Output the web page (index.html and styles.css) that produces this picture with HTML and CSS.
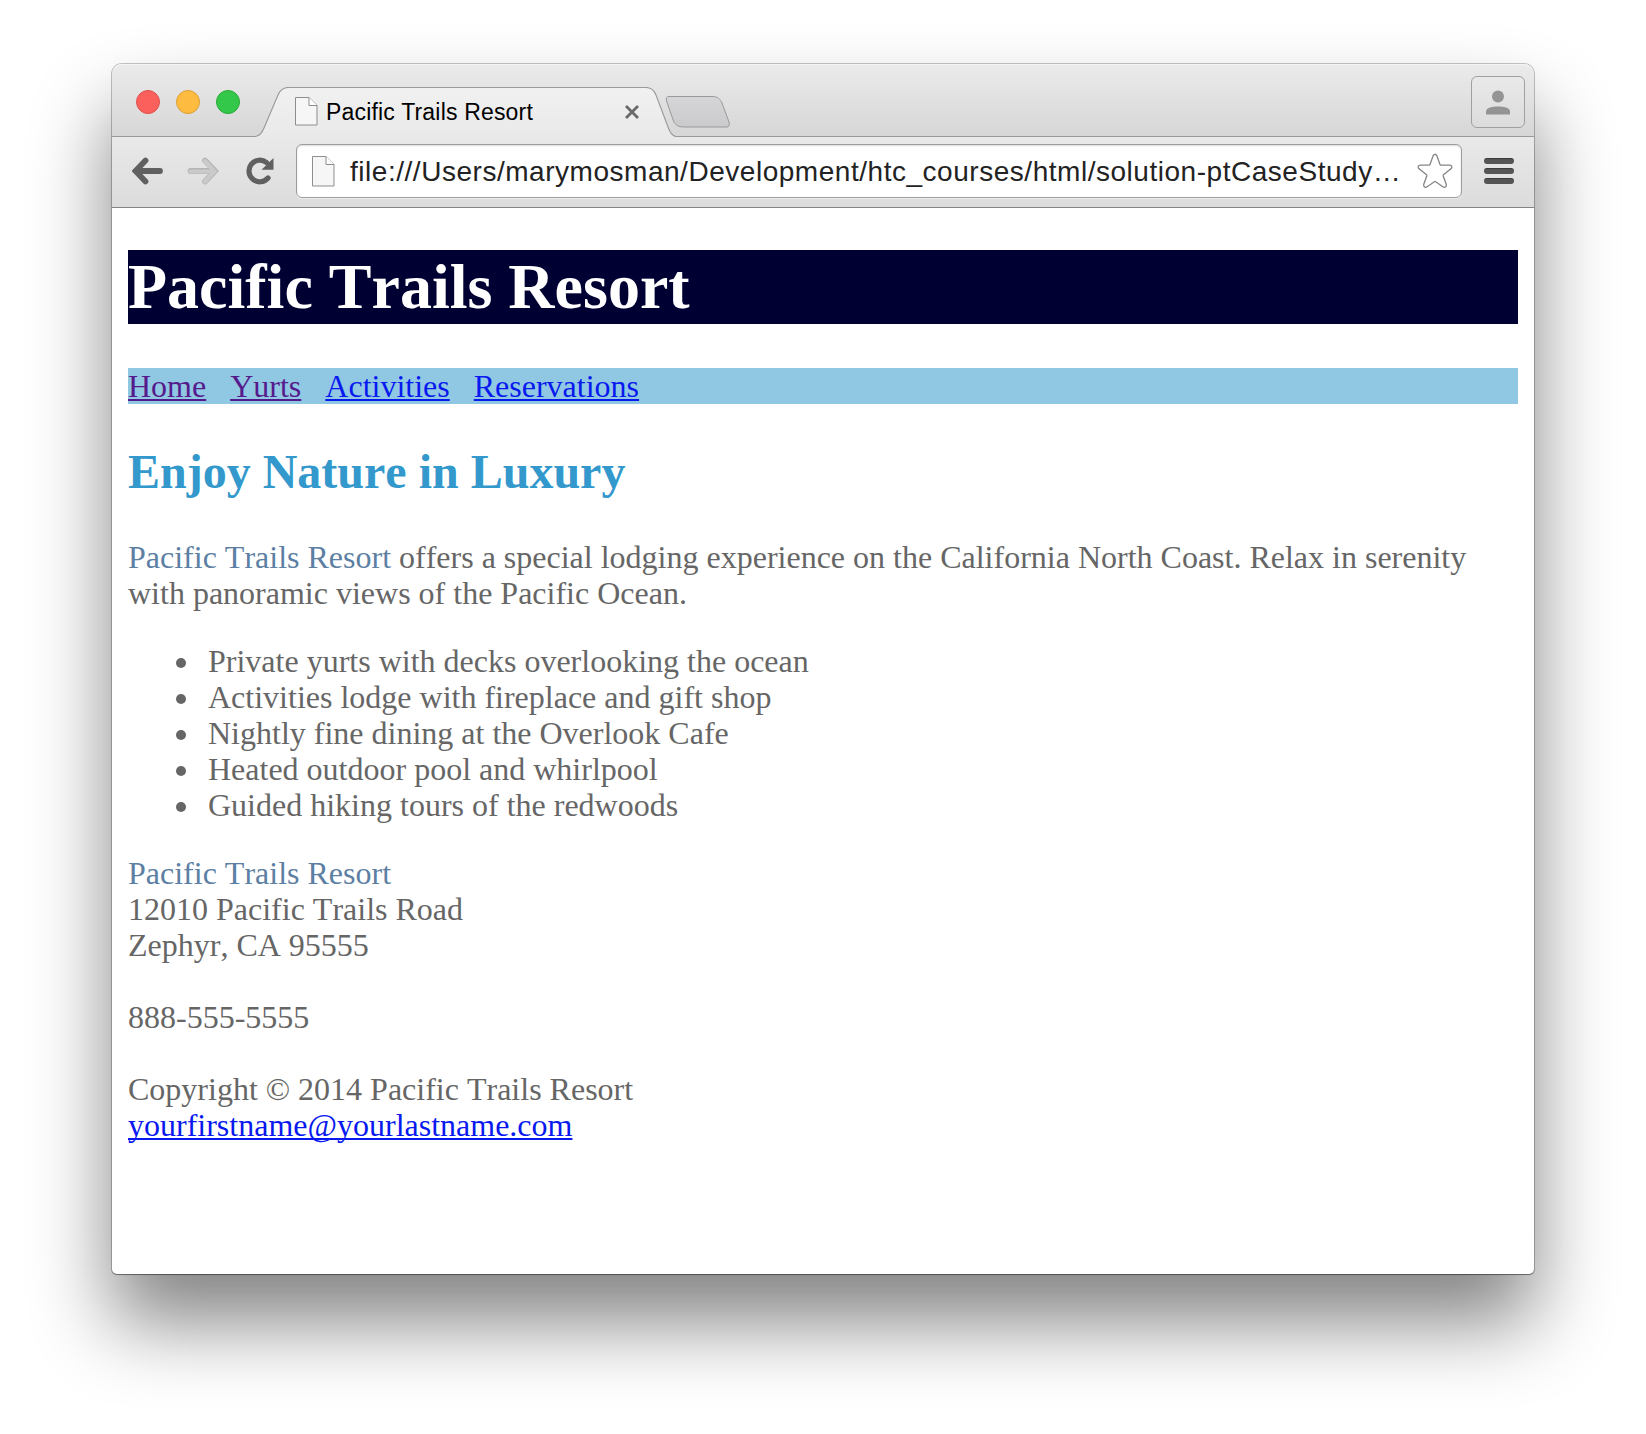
FILE: index.html
```html
<!DOCTYPE html>
<html lang="en">
<head>
<meta charset="utf-8">
<title>Pacific Trails Resort</title>
<link rel="stylesheet" href="styles.css">
</head>
<body>
<div class="window">
  <div class="tabstrip">
    <div class="lights"><span class="light red"></span><span class="light yellow"></span><span class="light green"></span></div>
    <div class="tab">
      <svg class="tab-shape" width="421" height="51" viewBox="0 0 421 51">
        <defs><linearGradient id="tabfill" x1="0" y1="0" x2="0" y2="1"><stop offset="0" stop-color="#f1f1f1"/><stop offset="1" stop-color="#e9e9e9"/></linearGradient></defs>
        <path d="M0 51V49.500C5 49 7 46 9 41L23 8Q26.500 .5 33 .5H391Q398 .5 401 8L413 40C415 46 417 49 421 49.500V51Z" fill="url(#tabfill)"/>
        <path d="M0 49.500C5 49 7 46 9 41L23 8Q26.500 .5 33 .5H391Q398 .5 401 8L413 40C415 46 417 49 421 49.500" fill="none" stroke="#999" stroke-width="1.100"/>
      </svg>
      <svg class="tab-doc" width="23" height="29" viewBox="0 0 23 29"><path d="M.5 .5H14L22 8.500V28H.5Z" fill="#f6f6f6" stroke="#8d8d8d"/><path d="M14 .5V8.500H22" fill="#fff" stroke="#8d8d8d"/></svg>
      <span class="tab-title">Pacific Trails Resort</span>
      <svg class="tab-close" width="16" height="16" viewBox="0 0 16 16"><path d="M2 2L14 14M14 2L2 14" stroke="#696969" stroke-width="2.800"/></svg>
    </div>
    <svg class="new-tab" width="66" height="34" viewBox="0 0 66 34">
      <defs><linearGradient id="nt" x1="0" y1="0" x2="0" y2="1"><stop offset="0" stop-color="#d6d6d8"/><stop offset="1" stop-color="#cacacc"/></linearGradient></defs>
      <path d="M4 1.500H47C53 1.500 55 4 57 8L64 27Q65.500 32 61 32H19C13 32 10.500 30 8.500 26L1.500 6Q.5 1.500 4 1.500Z" fill="url(#nt)" stroke="#999"/>
    </svg>
    <div class="profile">
      <svg width="24" height="25" viewBox="0 0 24 25"><g fill="#949494"><circle cx="12" cy="6.500" r="6"/><path d="M0 24.500V21C1 17.500 6 16.500 12 16.500S23 17.500 24 21V24.500Z"/></g></svg>
    </div>
  </div>

  <div class="toolbar">
    <svg class="back" width="32" height="28" viewBox="0 0 32 28"><path d="M28 14H5M13.500 3.500L3.500 14L13.500 24.500" fill="none" stroke="#606060" stroke-width="5.800" stroke-linecap="round"/></svg>
    <svg class="forward" width="32" height="28" viewBox="0 0 32 28"><path d="M3.500 14H27M18 3.500L28 14L18 24.500" fill="none" stroke="#b4b4b4" stroke-width="5.800" stroke-linecap="round"/><path d="M3.500 14.500H27M18 4L27.500 14.200L18 24.500" fill="none" stroke="#cacaca" stroke-width="4.200" stroke-linecap="round"/></svg>
    <svg class="reload" width="28" height="28" viewBox="0 0 28 28"><path d="M22 21A10.800 10.800 0 1 1 20.500 5.500" fill="none" stroke="#606060" stroke-width="5.200" stroke-linecap="round"/><path d="M27.500 1V12.800H15.500Z" fill="#606060"/></svg>
    <div class="omnibox">
      <svg class="url-doc" width="23" height="31" viewBox="0 0 23 31"><path d="M.5 .5H14L22 8.500V30H.5Z" fill="#f6f6f6" stroke="#8d8d8d"/><path d="M14 .5V8.500H22" fill="#fff" stroke="#8d8d8d"/></svg>
      <span class="url">file:///Users/marymosman/Development/htc_courses/html/solution-ptCaseStudy…</span>
      <svg class="star" width="36" height="36" viewBox="0 0 36 36"><path d="M16.200 2.500Q18 0 19.800 2.500L23 11.500Q23.200 12.100 24 12.100L33 12.200Q36 13 34.200 15.600L26.500 21.700Q26 22.200 26.200 23L29.300 31.500Q29.500 34.800 26.500 34.200L18.700 28.700Q18 28.300 17.300 28.700L9.500 34.200Q6.500 34.800 6.700 31.500L9.800 23Q10 22.200 9.500 21.700L1.800 15.600Q0 13 3 12.200L12 12.100Q12.800 12.100 13 11.500Z" fill="#fff" stroke="#858585" stroke-width="1.300"/></svg>
    </div>
    <div class="menu"><span></span><span></span><span></span></div>
  </div>

  <div class="page">
    <h1>Pacific Trails Resort</h1>
    <nav><a class="visited" href="#">Home</a>&nbsp;&nbsp; <a class="visited" href="#">Yurts</a>&nbsp;&nbsp; <a href="#">Activities</a>&nbsp;&nbsp; <a href="#">Reservations</a></nav>
    <h2>Enjoy Nature in Luxury</h2>
    <p><span class="resort">Pacific Trails Resort</span> offers a special lodging experience on the California North Coast. Relax in serenity with panoramic views of the Pacific Ocean.</p>
    <ul>
      <li>Private yurts with decks overlooking the ocean</li>
      <li>Activities lodge with fireplace and gift shop</li>
      <li>Nightly fine dining at the Overlook Cafe</li>
      <li>Heated outdoor pool and whirlpool</li>
      <li>Guided hiking tours of the redwoods</li>
    </ul>
    <div><span class="resort">Pacific Trails Resort</span><br>12010 Pacific Trails Road<br>Zephyr, CA 95555<br><br>888-555-5555<br><br></div>
    <footer>Copyright © 2014 Pacific Trails Resort<br><a href="#">yourfirstname@yourlastname.com</a></footer>
  </div>
</div>
</body>
</html>
```
FILE: styles.css
```css
* { box-sizing: border-box; }
html, body { margin: 0; height: 100%; overflow: hidden; background: #fff; }
body { padding: 64px 112px 0; font-kerning: none; }
svg { display: block; flex: none; }

.window {
  width: 1422px;
  height: 1210px;
  border-radius: 10px 10px 5px 5px;
  background: #fff;
  box-shadow: 0 0 0 1px rgba(0, 0, 0, .22), 0 1px 1px rgba(0, 0, 0, .3), 0 48px 80px rgba(0, 0, 0, .49);
}

.tabstrip {
  display: flex;
  align-items: flex-end;
  height: 73px;
  border-radius: 10px 10px 0 0;
  background: linear-gradient(#ebebeb, #d6d6d6);
  box-shadow: inset 0 1px #f4f4f4, inset 0 -1px #999;
}
.lights { display: flex; gap: 16px; padding-left: 24px; align-self: flex-start; margin-top: 26px; }
.light { width: 24px; height: 24px; border-radius: 50%; border: 1px solid; }
.red { background: #fc605c; border-color: #e0504c; }
.yellow { background: #fdbc40; border-color: #de9f34; }
.green { background: #34c84a; border-color: #27aa35; }

.tab { position: relative; display: flex; align-items: center; width: 421px; height: 50px; margin-left: 15px; padding: 0 40px 1px; }
.tab-shape { position: absolute; left: 0; top: 0; }
.tab-doc, .tab-title, .tab-close { position: relative; }
.tab-title { margin-left: 8px; font: 23px/28px "Liberation Sans", Arial, sans-serif; letter-spacing: .18px; color: #000; white-space: nowrap; }
.tab-close { margin-left: auto; margin-right: -4px; }
.new-tab { margin: 0 0 8px -11px; }
.profile { display: flex; align-items: center; justify-content: center; width: 54px; height: 52px; margin: 0 9px 9px auto; border: 1px solid #a0a0a0; border-radius: 6px; background: linear-gradient(#e9e9e9, #dcdcdc); }

.toolbar {
  display: flex;
  align-items: center;
  height: 71px;
  padding: 0 20px 2px;
  background: linear-gradient(#e9e9e9, #dcdcdc);
  border-bottom: 1px solid #858585;
}
.forward { margin-left: 23px; }
.reload { margin-left: 27px; }
.omnibox { display: flex; align-items: center; width: 1166px; height: 54px; margin-left: 22px; padding: 0 8px 0 15px; border: 1px solid #9c9c9c; border-radius: 6px; background: #fff; box-shadow: inset 0 1px 2px #ddd, 0 1px #efefef; }
.url { margin-left: 15px; padding-top: 2px; font: 28px/34px "Liberation Sans", Arial, sans-serif; letter-spacing: .53px; color: #222; white-space: nowrap; }
.star { margin-left: auto; }
.menu { display: grid; gap: 4px; margin-left: 22px; }
.menu span { width: 30px; height: 6px; border-radius: 3px; background: #555; border-top: 1px solid #3c3c3c; }

.page { padding: 42px 16px 0; font: 32px/36px "Liberation Serif", "Times New Roman", serif; font-kerning: none; color: #666; }
h1 { margin: 0 0 44px; font-size: 64px; line-height: 74px; color: #fff; background: #000033; }
nav { background: #90c7e3; }
h2 { margin: 40px 0; font-size: 48px; line-height: 55px; color: #3399cc; }
p { margin: 0; }
ul { margin: 32px 0; padding-left: 80px; list-style: none; }
li::before { content: ""; display: inline-block; width: 10px; height: 10px; margin: 0 22px 0 -32px; border-radius: 50%; background: #666; vertical-align: 4px; }
a { color: #0819f0; text-decoration-thickness: 2px; text-underline-offset: 2px; text-decoration-skip-ink: none; }
a.visited { color: #551a8b; }
.resort { color: #5c7fa3; }
```
